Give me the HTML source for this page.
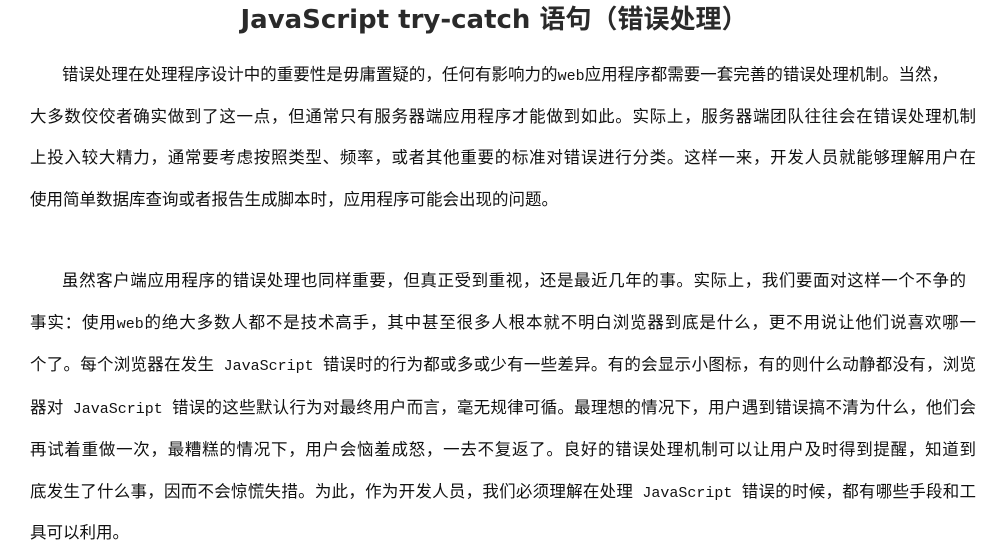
<!DOCTYPE html>
<html><head><meta charset="utf-8"><style>
body{margin:0;width:988px;height:554px;background:#fff;position:relative;overflow:hidden;font-family:"Liberation Sans","Noto Sans CJK SC",sans-serif;color:#111}
h1{position:absolute;top:0;left:0;width:988px;margin:0;text-align:center;font-size:26px;line-height:36px;font-weight:bold;color:#2a2a2a;font-family:"DejaVu Sans","Noto Sans CJK SC",sans-serif}
h1 span{font-family:"Noto Sans CJK SC",sans-serif}
.l{position:absolute;left:30px;width:946px;font-size:16.5px;line-height:24px;white-space:nowrap;text-align:justify;text-align-last:justify;color:#111}
.i{left:62px;width:886px}
.e{text-align-last:left}
.m{font-family:"Liberation Mono",monospace;font-size:15px}
</style></head><body>
<h1>JavaScript try-catch <span>语句（错误处理）</span></h1>
<div class="l i" style="top:63px">错误处理在处理程序设计中的重要性是毋庸置疑的，任何有影响力的<span class="m">web</span>应用程序都需要一套完善的错误处理机制。当然，</div>
<div class="l" style="top:105px">大多数佼佼者确实做到了这一点，但通常只有服务器端应用程序才能做到如此。实际上，服务器端团队往往会在错误处理机制</div>
<div class="l" style="top:146px">上投入较大精力，通常要考虑按照类型、频率，或者其他重要的标准对错误进行分类。这样一来，开发人员就能够理解用户在</div>
<div class="l e" style="top:188px">使用简单数据库查询或者报告生成脚本时，应用程序可能会出现的问题。</div>
<div class="l i" style="top:269px;width:904px">虽然客户端应用程序的错误处理也同样重要，但真正受到重视，还是最近几年的事。实际上，我们要面对这样一个不争的</div>
<div class="l" style="top:311px">事实：使用<span class="m">web</span>的绝大多数人都不是技术高手，其中甚至很多人根本就不明白浏览器到底是什么，更不用说让他们说喜欢哪一</div>
<div class="l" style="top:353px">个了。每个浏览器在发生<span class="m"> JavaScript </span>错误时的行为都或多或少有一些差异。有的会显示小图标，有的则什么动静都没有，浏览</div>
<div class="l" style="top:396px">器对<span class="m"> JavaScript </span>错误的这些默认行为对最终用户而言，毫无规律可循。最理想的情况下，用户遇到错误搞不清为什么，他们会</div>
<div class="l" style="top:438px">再试着重做一次，最糟糕的情况下，用户会恼羞成怒，一去不复返了。良好的错误处理机制可以让用户及时得到提醒，知道到</div>
<div class="l" style="top:480px">底发生了什么事，因而不会惊慌失措。为此，作为开发人员，我们必须理解在处理<span class="m"> JavaScript </span>错误的时候，都有哪些手段和工</div>
<div class="l e" style="top:521px">具可以利用。</div>
</body></html>
